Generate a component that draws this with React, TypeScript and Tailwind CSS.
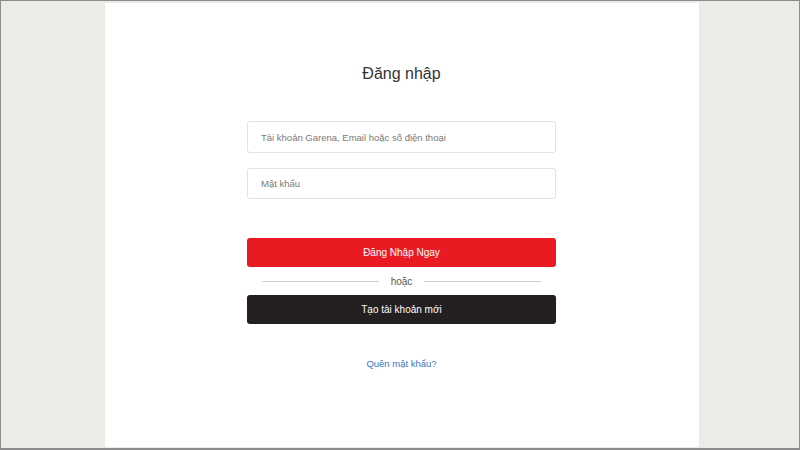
import React from 'react';

const font = { fontFamily: '"Liberation Sans", Arial, sans-serif' };

export default function App() {
  return (
    <div
      className="w-[800px] h-[450px] bg-[#ecebe7] border border-[#8c8c8c] border-b-2 flex justify-center text-[#333]"
      style={font}
    >
      <div className="w-[594px] ml-[3px] mt-[2px] mb-[1px] bg-white rounded-b-[3px] flex flex-col items-center">
        <h1 className="mt-[61px] text-[16px] leading-5 text-[#333]">Đăng nhập</h1>

        <div className="mt-[37px] w-[309px] flex flex-col">
          <input
            placeholder="Tài khoản Garena, Email hoặc số điện thoại"
            className="h-[32px] px-[13px] text-[9.5px] border border-[#e2e2e2] rounded-[3px] placeholder:text-[#7a7a7a] outline-none"
          />
          <input
            type="password"
            placeholder="Mật khẩu"
            className="mt-[15px] h-[31px] px-[13px] text-[9.5px] border border-[#e2e2e2] rounded-[3px] placeholder:text-[#7a7a7a] outline-none"
          />

          <button className="mt-[39px] h-[29px] bg-[#ea1a23] rounded-[3px] text-white text-[10px]">
            Đăng Nhập Ngay
          </button>

          <div className="h-[28px] flex items-center px-[15px] gap-[12px]">
            <div className="flex-1 h-px bg-[#cfcfcf]" />
            <span className="text-[10px] text-[#555]">hoặc</span>
            <div className="flex-1 h-px bg-[#cfcfcf]" />
          </div>

          <button className="h-[29px] bg-[#231f20] rounded-[3px] text-white text-[10px]">
            Tạo tài khoản mới
          </button>

          <a className="mt-[33px] self-center text-[9.5px] text-[#3a78c3]">Quên mật khẩu?</a>
        </div>
      </div>
    </div>
  );
}
